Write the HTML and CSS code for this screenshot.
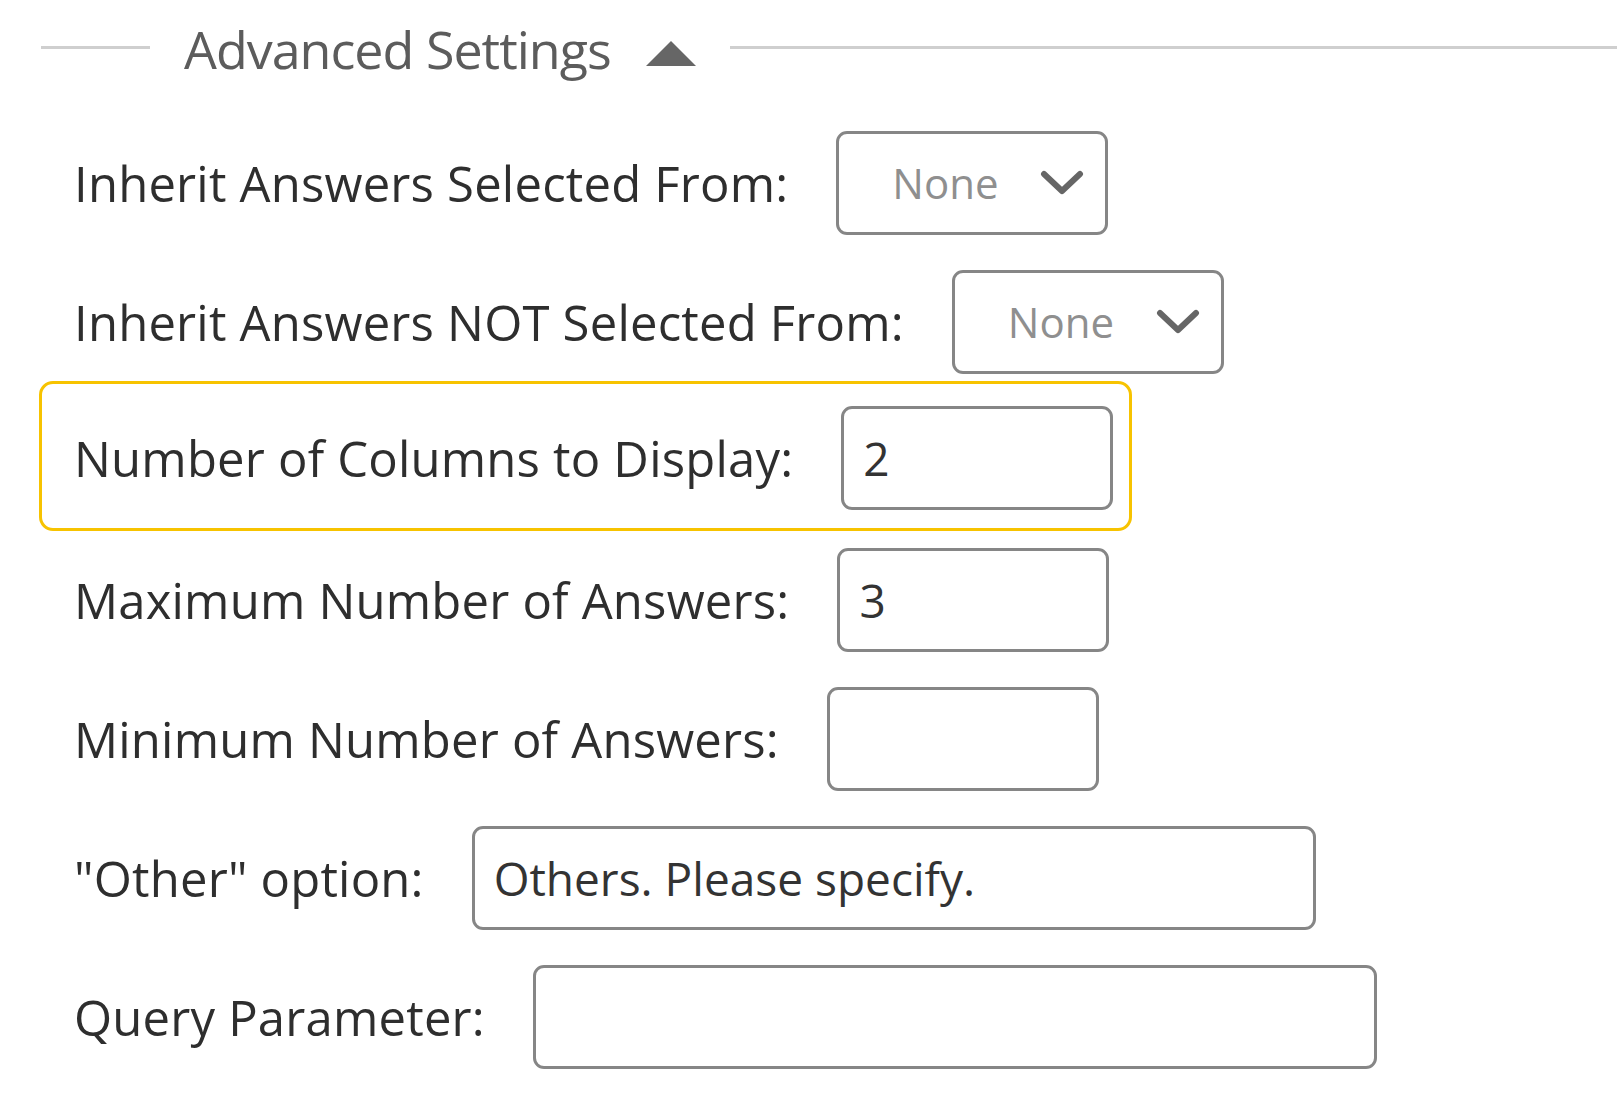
FILE: index.html
```html
<!DOCTYPE html>
<html lang="en">
<head>
<meta charset="utf-8">
<title>Advanced Settings</title>
<link rel="stylesheet" href="styles.css">
</head>
<body>
  <div class="section-head">
    <span class="rule rule-left"></span>
    <span class="section-title">Advanced Settings</span>
    <svg class="caret" viewBox="0 0 52 27" width="52" height="27" aria-hidden="true"><polygon points="26,1 51,26 1,26" fill="#666"/></svg>
    <span class="rule rule-right"></span>
  </div>

  <div class="form">
    <div class="row">
      <label class="label">Inherit Answers Selected From:</label>
      <div class="select">
        <span class="select-value">None</span>
        <svg class="chevron" viewBox="0 0 44 28" width="44" height="28" aria-hidden="true"><polyline points="4,5 22,22 40,5" fill="none" stroke="#666" stroke-width="6" stroke-linecap="round" stroke-linejoin="round"/></svg>
      </div>
    </div>
    <div class="row">
      <label class="label">Inherit Answers NOT Selected From:</label>
      <div class="select">
        <span class="select-value">None</span>
        <svg class="chevron" viewBox="0 0 44 28" width="44" height="28" aria-hidden="true"><polyline points="4,5 22,22 40,5" fill="none" stroke="#666" stroke-width="6" stroke-linecap="round" stroke-linejoin="round"/></svg>
      </div>
    </div>
    <div class="row row-highlight">
      <label class="label">Number of Columns to Display:</label>
      <input class="field field-sm" type="text" value="2">
    </div>
    <div class="row">
      <label class="label">Maximum Number of Answers:</label>
      <input class="field field-sm" type="text" value="3">
    </div>
    <div class="row">
      <label class="label">Minimum Number of Answers:</label>
      <input class="field field-sm" type="text" value="">
    </div>
    <div class="row">
      <label class="label">"Other" option:</label>
      <input class="field field-lg" type="text" value="Others. Please specify.">
    </div>
    <div class="row">
      <label class="label">Query Parameter:</label>
      <input class="field field-lg" type="text" value="">
    </div>
  </div>
</body>
</html>
```
FILE: styles.css
```css
html, body {
  margin: 0;
  padding: 0;
  background: #fff;
}

body {
  font-family: "Open Sans", "Liberation Sans", sans-serif;
  color: #333;
}

.section-head {
  display: flex;
  align-items: center;
  height: 94px;
  padding-left: 41px;
}

.rule {
  height: 3px;
  background: #cfcfcf;
}

.rule-left {
  width: 109px;
}

.rule-right {
  flex: 1;
  margin-left: 33px;
}

.section-title {
  margin: 0 34px 0 34px;
  font-size: 52px;
  letter-spacing: -1px;
  color: #5c5c5c;
  line-height: 1;
  padding-top: 4px;
}

.caret {
  display: block;
  margin-top: 12px;
}

.form {
  display: flex;
  flex-direction: column;
  gap: 35px;
  padding-left: 74px;
  margin-top: 37px;
}

.row {
  position: relative;
  display: flex;
  align-items: center;
  gap: 48px;
  height: 104px;
}

.row-highlight {
  margin-top: -3px;
  margin-bottom: 3px;
}

.row-highlight::before {
  content: "";
  position: absolute;
  top: -25px;
  bottom: -21px;
  left: -35px;
  width: 1093px;
  border: 3px solid #f7c300;
  border-radius: 14px;
  box-sizing: border-box;
  pointer-events: none;
}

.label {
  font-size: 49px;
  letter-spacing: 0.2px;
  line-height: 1;
  color: #2e2e2e;
  white-space: nowrap;
}

.select {
  box-sizing: border-box;
  display: flex;
  align-items: center;
  width: 272px;
  height: 104px;
  padding: 0 21px 0 53px;
  border: 3px solid #868686;
  border-radius: 11px;
  background: #fff;
}

.select-value {
  font-size: 42px;
  color: #8f8f8f;
  line-height: 1;
}

.chevron {
  display: block;
  margin-left: auto;
}

.field {
  box-sizing: border-box;
  height: 104px;
  padding: 0 19px;
  border: 3px solid #868686;
  border-radius: 11px;
  background: #fff;
  font-family: "Open Sans", "Liberation Sans", sans-serif;
  font-size: 46px;
  color: #333;
  outline: none;
}

.field-sm {
  width: 272px;
}

.field-lg {
  width: 844px;
}
```
